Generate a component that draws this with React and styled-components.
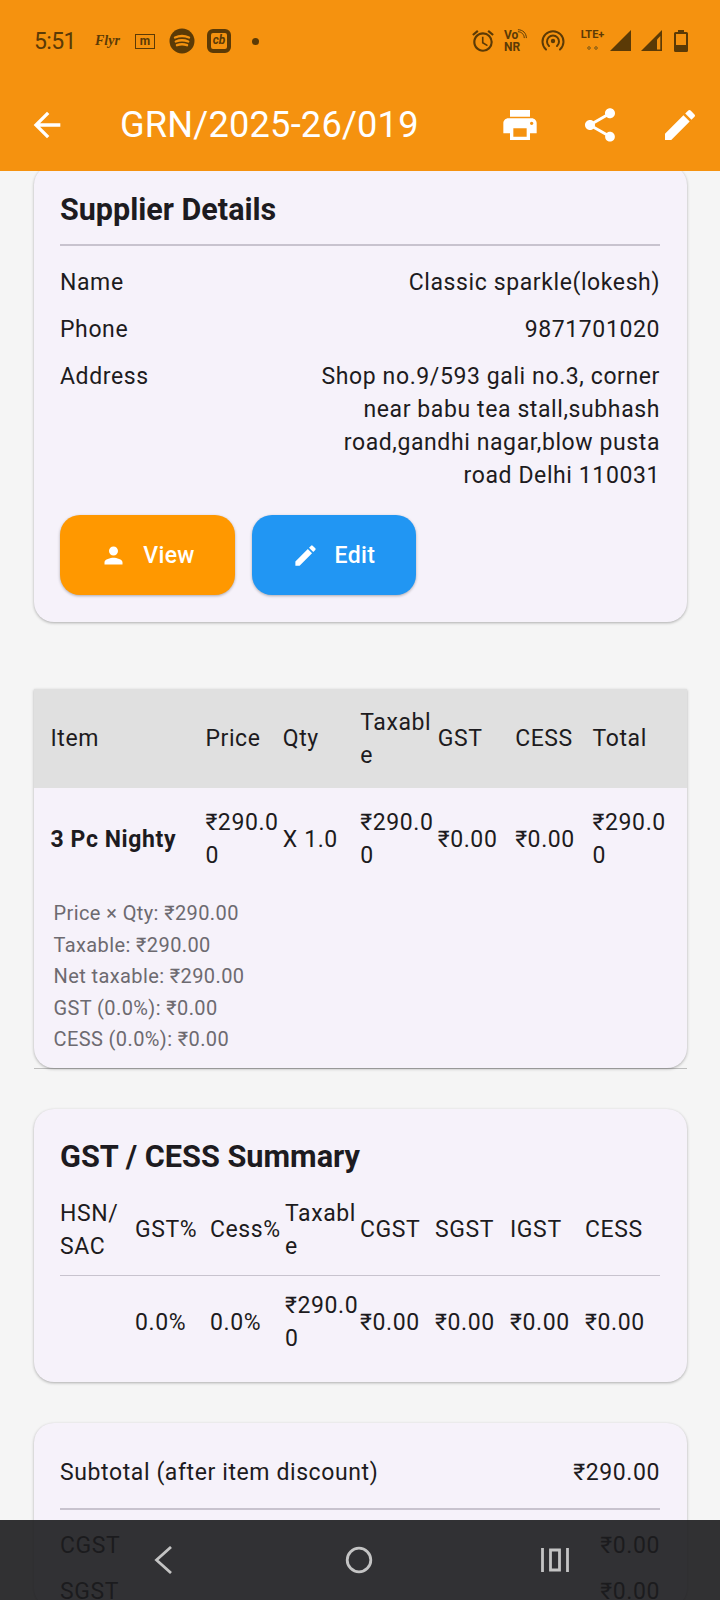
import React from 'react';
import styled, { createGlobalStyle } from 'styled-components';
import { MdArrowBack, MdPrint, MdShare, MdEdit, MdPerson, MdAccessAlarm } from 'react-icons/md';

const GlobalStyle = createGlobalStyle`
  html, body {
    margin: 0;
    padding: 0;
    background: #f5f5f5;
    font-family: Roboto, "Noto Sans", sans-serif;
    color: #1d1b20;
  }
`;

const supplierRows = [
  ['Name', 'Classic sparkle(lokesh)'],
  ['Phone', '9871701020'],
];

const itemHead = ['Item', 'Price', 'Qty', 'Taxable', 'GST', 'CESS', 'Total'];
const itemRow = ['3 Pc Nighty', '₹290.00', 'X 1.0', '₹290.00', '₹0.00', '₹0.00', '₹290.00'];
const itemNotes = [
  'Price × Qty: ₹290.00',
  'Taxable: ₹290.00',
  'Net taxable: ₹290.00',
  'GST (0.0%): ₹0.00',
  'CESS (0.0%): ₹0.00',
];

const gstHead = ['HSN/ SAC', 'GST%', 'Cess%', 'Taxable', 'CGST', 'SGST', 'IGST', 'CESS'];
const gstRow = ['', '0.0%', '0.0%', '₹290.00', '₹0.00', '₹0.00', '₹0.00', '₹0.00'];

const App = () => (
  <Screen>
    <GlobalStyle />
    <Header>
      <StatusBar>
        <StatusLeft>
          <Clock>5:51</Clock>
          <Flyr>Flyr</Flyr>
          <MBox>m</MBox>
          <svg width="26" height="26" viewBox="0 0 26 26">
            <circle cx="13" cy="13" r="12.5" fill="#5b3a06" />
            <path d="M6 9.5c4.500-2 9.500-2 14 0M6.800 13.500c4-1.700 8.400-1.700 12.400 0M8 17.200c3.200-1.300 6.800-1.300 10 0" stroke="#f5920f" strokeWidth="2.400" fill="none" strokeLinecap="round" />
          </svg>
          <CbBox>cb</CbBox>
          <Dot />
        </StatusLeft>
        <StatusRight>
          <MdAccessAlarm size={26} color="#5b3a06" />
          <VoNr>
            <span>Vo</span>
            <span>NR</span>
            <VoWaves width="10" height="10" viewBox="0 0 11 11">
              <path d="M1 3c4 0 7 3 7 7M1 .8c5.500 0 9.300 3.800 9.300 9.200" stroke="#5b3a06" strokeWidth="1.100" fill="none" />
            </VoWaves>
          </VoNr>
          <Hotspot width="24" height="24" viewBox="0 0 24 24">
            <circle cx="12" cy="12" r="2.200" fill="#5b3a06" />
            <path d="M8 17a6 6 0 1 1 8 0M5 20.500a10.500 10.500 0 1 1 14 0" stroke="#5b3a06" strokeWidth="2" fill="none" strokeLinecap="round" />
          </Hotspot>
          <Lte>
            LTE+
            <LteDots />
          </Lte>
          <SignalGroup>
            <svg width="22" height="22" viewBox="0 0 22 22">
              <path d="M0 21 21 0v21z" fill="#5b3a06" />
            </svg>
            <svg width="22" height="22" viewBox="0 0 22 22">
              <path d="M0 21 21 0v21z" fill="#5b3a06" />
              <path d="M16 9.500 19.300 6v13.400H16z" fill="#f5920f" />
            </svg>
          </SignalGroup>
          <Battery width="14" height="22" viewBox="0 0 14 22">
            <path d="M4 0h6v2h2.500A1.500 1.500 0 0 1 14 3.500v17a1.500 1.500 0 0 1-1.500 1.500h-11A1.500 1.500 0 0 1 0 20.500v-17A1.500 1.500 0 0 1 1.500 2H4z" fill="#5b3a06" />
            <path d="M2 4h10v11H2z" fill="#f5920f" />
          </Battery>
        </StatusRight>
      </StatusBar>
      <AppBar>
        <BackIcon />
        <AppTitle>GRN/2025-26/019</AppTitle>
        <AppActions>
          <MdPrint size={40} />
          <MdShare size={40} />
          <MdEdit size={40} />
        </AppActions>
      </AppBar>
    </Header>

    <Content>
      <SupplierCard>
        <CardTitle>Supplier Details</CardTitle>
        <Divider />
        <DetailList>
          {supplierRows.map(([label, value]) => (
            <DetailRow key={label}>
              <span>{label}</span>
              <span>{value}</span>
            </DetailRow>
          ))}
          <DetailRow>
            <span>Address</span>
            <AddressValue>
              Shop no.9/593 gali no.3, corner near babu tea stall,subhash road,gandhi nagar,blow pusta road Delhi 110031
            </AddressValue>
          </DetailRow>
        </DetailList>
        <ButtonRow>
          <ActionButton $bg="#ff9800" $width="175px">
            <MdPerson size={27} />
            View
          </ActionButton>
          <ActionButton $bg="#2196f3" $width="164px">
            <MdEdit size={27} />
            Edit
          </ActionButton>
        </ButtonRow>
      </SupplierCard>

      <ItemsTable>
        <ItemsCard>
          <ItemsHead>
            {itemHead.map(text => (
              <Cell key={text}>{text}</Cell>
            ))}
          </ItemsHead>
          <ItemsRow>
            {itemRow.map((text, i) => (
              <Cell key={i} $bold={i === 0}>
                {text}
              </Cell>
            ))}
          </ItemsRow>
          <ItemNotes>
            {itemNotes.map(note => (
              <div key={note}>{note}</div>
            ))}
          </ItemNotes>
        </ItemsCard>
      </ItemsTable>

      <SummaryCard>
        <SummaryTitle>GST / CESS Summary</SummaryTitle>
        <SummaryHead>
          {gstHead.map(text => (
            <Cell key={text}>{text}</Cell>
          ))}
        </SummaryHead>
        <Divider />
        <SummaryRow>
          {gstRow.map((text, i) => (
            <Cell key={i}>{text}</Cell>
          ))}
        </SummaryRow>
      </SummaryCard>

      <TotalsCard>
        <SubtotalRow>
          <span>Subtotal (after item discount)</span>
          <span>₹290.00</span>
        </SubtotalRow>
        <Divider />
        <TotalRow>
          <span>CGST</span>
          <span>₹0.00</span>
        </TotalRow>
        <TotalRow>
          <span>SGST</span>
          <span>₹0.00</span>
        </TotalRow>
      </TotalsCard>
    </Content>

    <NavBar>
      <svg width="24" height="28" viewBox="0 0 24 28">
        <path d="M18 1 3.500 14 18 27" stroke="#c4c4c4" strokeWidth="2.800" fill="none" />
      </svg>
      <svg width="28" height="28" viewBox="0 0 28 28">
        <circle cx="14" cy="14" r="11.800" stroke="#c4c4c4" strokeWidth="2.800" fill="none" />
      </svg>
      <svg width="28" height="26" viewBox="0 0 28 26">
        <path d="M1.500 1v24M26.500 1v24M9.500 3h9v20h-9z" stroke="#c4c4c4" strokeWidth="2.800" fill="none" />
      </svg>
    </NavBar>
  </Screen>
);

const Screen = styled.div`
  position: relative;
  width: 720px;
  height: 1600px;
  overflow: hidden;
  background: #f5f5f5;
`;

const Header = styled.header`
  position: relative;
  z-index: 2;
  height: 171px;
  box-sizing: border-box;
  background: #f5920f;
  padding-top: 26px;
`;

const StatusBar = styled.div`
  display: flex;
  justify-content: space-between;
  align-items: center;
  height: 30px;
  padding: 0 32px 0 34px;
  color: #5b3a06;
`;

const StatusLeft = styled.div`
  display: flex;
  align-items: center;
`;

const Clock = styled.span`
  font-size: 23px;
  letter-spacing: -0.6px;
  width: 61px;
`;

const Flyr = styled.span`
  font-family: "Liberation Serif", serif;
  font-style: italic;
  font-weight: 700;
  font-size: 14px;
  width: 40px;
`;

const MBox = styled.span`
  box-sizing: border-box;
  width: 20px;
  height: 15px;
  margin-right: 14px;
  border: 1px solid #5b3a06;
  font-size: 12px;
  font-weight: 700;
  line-height: 12px;
  text-align: center;
`;

const CbBox = styled.span`
  box-sizing: border-box;
  width: 24px;
  height: 24px;
  margin-left: 12px;
  border: 4px solid #5b3a06;
  border-radius: 6px;
  font-size: 12px;
  font-style: italic;
  font-weight: 700;
  line-height: 15px;
  text-align: center;
`;

const Dot = styled.span`
  width: 7px;
  height: 7px;
  margin-left: 21px;
  border-radius: 50%;
  background: #5b3a06;
`;

const StatusRight = styled.div`
  display: flex;
  align-items: center;
`;

const VoNr = styled.span`
  position: relative;
  display: flex;
  flex-direction: column;
  width: 23px;
  margin-left: 8px;
  font-size: 12px;
  font-weight: 700;
  line-height: 12px;
`;

const VoWaves = styled.svg`
  position: absolute;
  top: 0;
  right: 0;
`;

const Hotspot = styled.svg`
  margin-left: 14px;
`;

const Lte = styled.span`
  display: flex;
  flex-direction: column;
  align-items: center;
  width: 27px;
  margin-left: 14px;
  font-size: 11px;
  font-weight: 700;
  line-height: 14px;
  transform: translateY(-2px);
`;

const LteDots = styled.span`
  width: 11px;
  height: 4px;
  margin-top: 4px;
  background: radial-gradient(circle at 2px 2px, #a86d14 2px, transparent 2px),
    radial-gradient(circle at 9px 2px, #a86d14 2px, transparent 2px);
`;

const SignalGroup = styled.span`
  display: flex;
  gap: 9px;
  margin-left: 4px;
`;

const Battery = styled.svg`
  margin-left: 11px;
`;

const AppBar = styled.div`
  display: flex;
  align-items: center;
  height: 84px;
  margin-top: 26px;
  color: #fff;
`;

const BackIcon = styled(MdArrowBack)`
  width: 40px;
  height: 40px;
  margin: 2px 0 0 27px;
  flex: none;
`;

const AppTitle = styled.h1`
  margin: 0 0 0 53px;
  font-size: 36.200px;
  font-weight: 400;
  letter-spacing: 0.2px;
  white-space: nowrap;
`;

const AppActions = styled.div`
  display: flex;
  align-items: center;
  gap: 40px;
  margin: 2px 0 0 auto;
  padding-right: 20px;
`;

const Content = styled.main`
  display: flex;
  flex-direction: column;
  margin-top: -6px;
`;

const Card = styled.section`
  margin: 0 33px 0 34px;
  background: #f6f2fa;
  border-radius: 20px;
  box-shadow: 0 1px 3px rgba(0, 0, 0, 0.3);
`;

const SupplierCard = styled(Card)`
  height: 457px;
  box-sizing: border-box;
  padding: 25px 27px 0 26px;
`;

const CardTitle = styled.h2`
  margin: 0 0 14px;
  font-size: 30.500px;
  line-height: 40px;
  font-weight: 700;
`;

const Divider = styled.hr`
  margin: 0;
  border: 0;
  height: 1.500px;
  background: #c8c3ce;
`;

const DetailList = styled.div`
  display: flex;
  flex-direction: column;
  gap: 14px;
  margin-top: 20px;
`;

const DetailRow = styled.div`
  display: flex;
  justify-content: space-between;
  font-size: 23px;
  line-height: 33px;
  letter-spacing: 0.6px;
`;

const AddressValue = styled.span`
  width: 350px;
  text-align: right;
`;

const ButtonRow = styled.div`
  display: flex;
  gap: 16.500px;
  margin-top: 23px;
`;

const ActionButton = styled.button`
  display: flex;
  align-items: center;
  justify-content: center;
  gap: 16px;
  width: ${props => props.$width};
  height: 80px;
  padding: 2px 0 0;
  border: 0;
  border-radius: 20px;
  background: ${props => props.$bg};
  color: #fff;
  font-family: inherit;
  font-size: 23px;
  font-weight: 500;
  letter-spacing: 0.4px;
  box-shadow: 0 1px 3px rgba(0, 0, 0, 0.3);
`;

const Cell = styled.div`
  font-size: 23px;
  line-height: 33px;
  letter-spacing: 0.6px;
  font-weight: ${props => (props.$bold ? 700 : 400)};
  overflow-wrap: anywhere;
`;

const ItemsTable = styled.div`
  margin: 67px 33px 0 33.500px;
  border-bottom: 1px solid #bdbdbd;
`;

const ItemsCard = styled(Card)`
  margin: 0;
  height: 379px;
  border-radius: 0 0 20px 20px;
  overflow: hidden;
`;

const itemColumns = `
  display: grid;
  grid-template-columns: 2fr repeat(6, 1fr);
  align-items: center;
  padding: 0 17px;
`;

const ItemsHead = styled.div`
  ${itemColumns}
  height: 99px;
  background: #e0e0e0;
`;

const ItemsRow = styled.div`
  ${itemColumns}
  height: 100px;
  padding-top: 2px;
  box-sizing: border-box;
`;

const ItemNotes = styled.div`
  padding: 10px 20px 0;
  font-size: 20px;
  line-height: 31.500px;
  letter-spacing: 0.4px;
  color: #6d6a70;
`;

const SummaryCard = styled(Card)`
  margin-top: 40px;
  height: 273px;
  box-sizing: border-box;
  padding: 26px 27px 0 26px;
`;

const SummaryTitle = styled.h2`
  margin: 0 0 5.500px;
  font-size: 30.700px;
  line-height: 44px;
  font-weight: 700;
`;

const summaryColumns = `
  display: grid;
  grid-template-columns: repeat(8, 1fr);
  align-items: center;
`;

const SummaryHead = styled.div`
  ${summaryColumns}
  height: 90px;
`;

const SummaryRow = styled.div`
  ${summaryColumns}
  height: 92px;
`;

const TotalsCard = styled(Card)`
  margin-top: 41px;
  padding: 0 27px 0 26px;
`;

const TotalRow = styled.div`
  display: flex;
  justify-content: space-between;
  padding-top: 13px;
  font-size: 23px;
  line-height: 33px;
  letter-spacing: 0.6px;

  ${Divider} + & {
    padding-top: 19px;
  }
`;

const SubtotalRow = styled(TotalRow)`
  padding: 33px 0 19px;
`;

const NavBar = styled.nav`
  position: absolute;
  left: 0;
  right: 0;
  bottom: 0;
  z-index: 3;
  height: 80px;
  display: flex;
  align-items: center;
  justify-content: space-between;
  padding: 0 151px 0 153px;
  background: rgba(28, 28, 30, 0.9);
`;

export default App;
